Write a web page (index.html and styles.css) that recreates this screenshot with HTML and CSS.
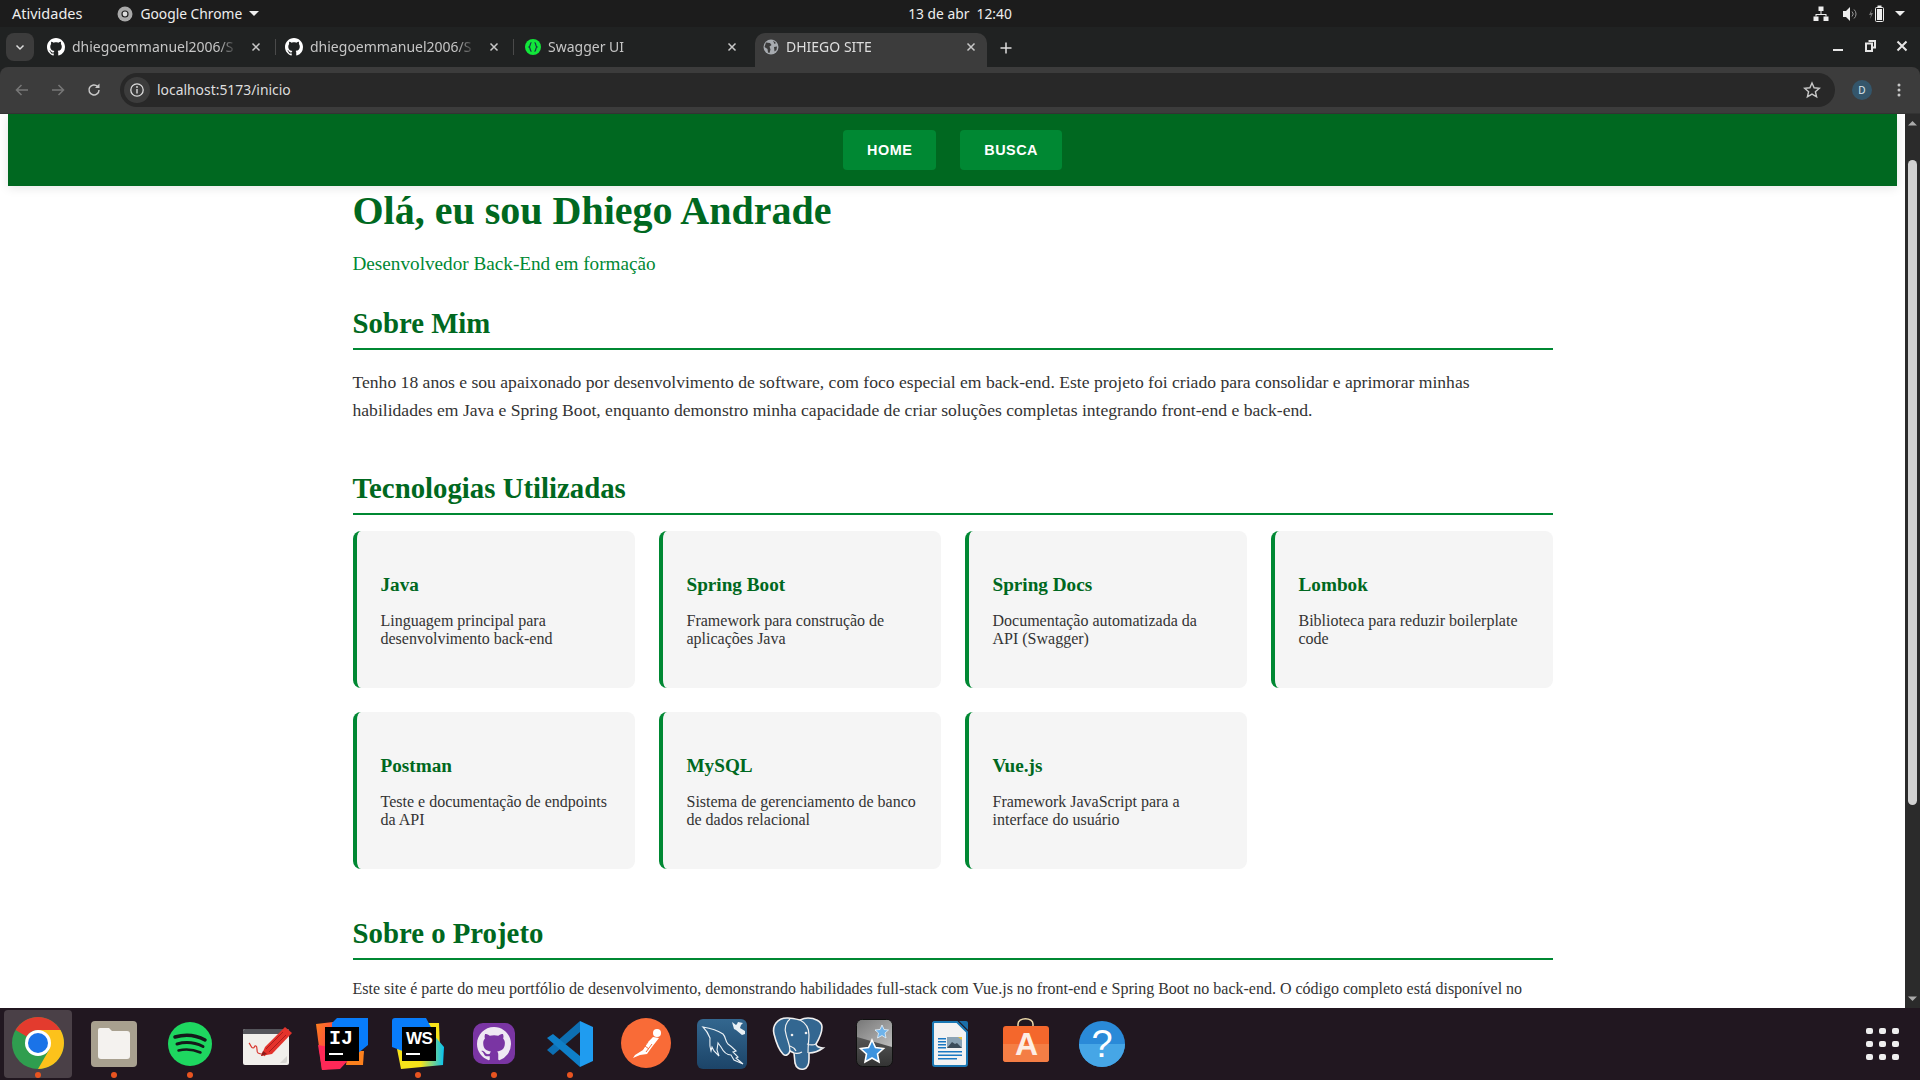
FILE: index.html
```html
<!DOCTYPE html>
<html lang="pt-BR">
<head>
<meta charset="UTF-8">
<title>DHIEGO SITE</title>
<link rel="stylesheet" href="styles.css">
</head>
<body>
<svg class="defs" width="0" height="0">
    <symbol id="gh" viewBox="0 0 16 16">
        <path d="M8 0C3.58 0 0 3.58 0 8c0 3.54 2.29 6.53 5.47 7.59.4.07.55-.17.55-.38 0-.19-.01-.82-.01-1.49-2.01.37-2.53-.49-2.69-.94-.09-.23-.48-.94-.82-1.13-.28-.15-.68-.52-.01-.53.63-.01 1.08.58 1.23.82.72 1.21 1.87.87 2.33.66.07-.52.28-.87.51-1.07-1.78-.2-3.64-.89-3.64-3.95 0-.87.31-1.59.82-2.15-.08-.2-.36-1.02.08-2.12 0 0 .67-.21 2.2.82.64-.18 1.32-.27 2-.27.68 0 1.36.09 2 .27 1.53-1.04 2.2-.82 2.2-.82.44 1.1.16 1.92.08 2.12.51.56.82 1.27.82 2.15 0 3.07-1.87 3.75-3.65 3.95.29.25.54.73.54 1.48 0 1.07-.01 1.93-.01 2.2 0 .21.15.46.55.38A8.013 8.013 0 0016 8c0-4.42-3.58-8-8-8z"/>
    </symbol>
    <symbol id="x" viewBox="0 0 16 16">
        <path d="M4.5 4.5l7 7M11.5 4.5l-7 7" stroke="#c8c8c8" stroke-width="1.5" fill="none"/>
    </symbol>
</svg>

<div class="topbar">
    <div class="topbar-left">
        <span class="activities">Atividades</span>
        <span class="app-menu">
            <svg width="16" height="16" viewBox="0 0 16 16"><circle cx="8" cy="8" r="7.5" fill="#a9a9a9"/><circle cx="8" cy="8" r="3.6" fill="#222"/><circle cx="8" cy="8" r="2.4" fill="#ddd"/></svg>
            Google Chrome
            <i class="caret"></i>
        </span>
    </div>
    <div class="clock">13 de abr&nbsp; 12:40</div>
    <div class="tray">
        <svg width="16" height="16" viewBox="0 0 16 16" fill="#eee"><rect x="5.5" y="0.5" width="5" height="4.500"/><rect x="0.500" y="10.500" width="5" height="4.500"/><rect x="10.500" y="10.500" width="5" height="4.500"/><path d="M7.500 5h1v3h5v2.500h-1V9H3.500v1.500h-1V8h5z"/></svg>
        <svg width="16" height="16" viewBox="0 0 16 16"><path fill="#eee" d="M1 5h3l4-4v14l-4-4H1z"/><path d="M10 5.500a3.500 3.500 0 010 5M12 3.500a6 6 0 010 9" stroke="#999" fill="none" stroke-width="1"/></svg>
        <svg width="20" height="18" viewBox="0 0 20 18"><path fill="#777" d="M4 4L1 10h2l-1 4 3-6H3z"/><rect x="7.500" y="2.500" width="8" height="14" rx="1" fill="none" stroke="#eee"/><rect x="9" y="4" width="5" height="11" fill="#eee"/><rect x="9.500" y="0.500" width="4" height="2" fill="#eee"/></svg>
        <i class="caret"></i>
    </div>
</div>

<div class="tabstrip">
    <div class="tab-search"><svg width="12" height="12" viewBox="0 0 12 12"><path d="M2.500 4.500L6 8l3.500-3.500" stroke="#ddd" stroke-width="1.500" fill="none"/></svg></div>
    <div class="tab">
        <svg class="favicon favicon-gh" width="18" height="18"><use href="#gh"/></svg>
        <span class="tab-title">dhiegoemmanuel2006/S</span>
        <svg class="tab-close" width="16" height="16"><use href="#x"/></svg>
    </div>
    <div class="tab">
        <svg class="favicon favicon-gh" width="18" height="18"><use href="#gh"/></svg>
        <span class="tab-title">dhiegoemmanuel2006/S</span>
        <svg class="tab-close" width="16" height="16"><use href="#x"/></svg>
    </div>
    <div class="tab tab-last">
        <svg class="favicon" width="16" height="16" viewBox="0 0 16 16"><circle cx="8" cy="8" r="8" fill="#12e63a"/><path d="M6.500 3.500C4.500 4 6 7 4 8c2 1 .5 4 2.500 4.500M9.500 3.500C11.500 4 10 7 12 8c-2 1-.5 4-2.500 4.500" stroke="#173646" stroke-width="1.200" fill="none"/></svg>
        <span class="tab-title">Swagger UI</span>
        <svg class="tab-close" width="16" height="16"><use href="#x"/></svg>
    </div>
    <div class="tab tab-active">
        <svg class="favicon" width="16" height="16" viewBox="0 0 16 16"><circle cx="8" cy="8" r="7.500" fill="#a7abb0"/><path d="M3 3.500l4 .5 1.500 2-2 1.500 1 3-1 3.500-1.500-.5-.5-3.500-3-2zM10 1.500l3 2.500-1.500 1zM11 8l3-.5-.5 3.500-2 1.500z" fill="#3c3c3c"/></svg>
        <span class="tab-title">DHIEGO SITE</span>
        <svg class="tab-close" width="16" height="16"><use href="#x"/></svg>
    </div>
    <svg class="new-tab" width="16" height="16" viewBox="0 0 16 16"><path d="M8 2.500v11M2.500 8h11" stroke="#ddd" stroke-width="1.500"/></svg>
    <div class="window-controls">
        <svg width="16" height="16" viewBox="0 0 16 16"><rect x="3" y="11" width="10" height="2" fill="#e6e6e6"/></svg>
        <svg width="16" height="16" viewBox="0 0 16 16"><path d="M6.500 3h6.500v6.500h-2" fill="none" stroke="#e6e6e6" stroke-width="2"/><rect x="4" y="5.500" width="6" height="7.500" fill="none" stroke="#e6e6e6" stroke-width="2"/></svg>
        <svg width="16" height="16" viewBox="0 0 16 16"><path d="M3.500 3.500l9 9M12.500 3.500l-9 9" stroke="#e6e6e6" stroke-width="2"/></svg>
    </div>
</div>

<div class="toolbar">
    <div class="nav-buttons">
        <svg width="16" height="16" viewBox="0 0 16 16"><path d="M14 8H3M7.500 3L2.500 8l5 5" stroke="#777" stroke-width="1.500" fill="none"/></svg>
        <svg width="16" height="16" viewBox="0 0 16 16"><path d="M2 8h11M8.500 3l5 5-5 5" stroke="#777" stroke-width="1.500" fill="none"/></svg>
        <svg width="16" height="16" viewBox="0 0 16 16"><path d="M13 8a5 5 0 11-1.500-3.600" stroke="#c8c8c8" stroke-width="1.500" fill="none"/><path d="M13.500 1.500v4.500H9z" fill="#c8c8c8"/></svg>
    </div>
    <div class="omnibox">
        <span class="site-info"><svg width="16" height="16" viewBox="0 0 16 16"><circle cx="8" cy="8" r="6.200" fill="none" stroke="#ddd" stroke-width="1.300"/><path d="M8 7v4.500" stroke="#ddd" stroke-width="1.400"/><circle cx="8" cy="5" r=".9" fill="#ddd"/></svg></span>
        <span class="url">localhost:5173/inicio</span>
        <svg class="star" width="18" height="18" viewBox="0 0 18 18"><path d="M9 2l2.100 4.800 5.200.5-3.900 3.400 1.200 5.100L9 13.100l-4.600 2.700 1.200-5.100-3.900-3.400 5.200-.5z" fill="none" stroke="#c8c8c8" stroke-width="1.400"/></svg>
    </div>
    <span class="avatar">D</span>
    <svg class="kebab" width="16" height="16" viewBox="0 0 16 16" fill="#c8c8c8"><circle cx="8" cy="3" r="1.500"/><circle cx="8" cy="8" r="1.500"/><circle cx="8" cy="13" r="1.500"/></svg>
</div>

<div class="viewport">
    <div class="site">
        <nav class="site-nav">
            <a class="nav-btn">HOME</a>
            <a class="nav-btn">BUSCA</a>
        </nav>
        <main class="content">
            <h1>Olá, eu sou Dhiego Andrade</h1>
            <p class="subtitle">Desenvolvedor Back-End em formação</p>

            <section class="about">
                <h2>Sobre Mim</h2>
                <p class="lead">Tenho 18 anos e sou apaixonado por desenvolvimento de software, com foco especial em back-end. Este projeto foi criado para consolidar e aprimorar minhas habilidades em Java e Spring Boot, enquanto demonstro minha capacidade de criar soluções completas integrando front-end e back-end.</p>
            </section>

            <section class="tech">
                <h2>Tecnologias Utilizadas</h2>
                <div class="tech-grid">
                    <div class="tech-card"><h3>Java</h3><p>Linguagem principal para desenvolvimento back-end</p></div>
                    <div class="tech-card"><h3>Spring Boot</h3><p>Framework para construção de aplicações Java</p></div>
                    <div class="tech-card"><h3>Spring Docs</h3><p>Documentação automatizada da API (Swagger)</p></div>
                    <div class="tech-card"><h3>Lombok</h3><p>Biblioteca para reduzir boilerplate code</p></div>
                    <div class="tech-card"><h3>Postman</h3><p>Teste e documentação de endpoints da API</p></div>
                    <div class="tech-card"><h3>MySQL</h3><p>Sistema de gerenciamento de banco de dados relacional</p></div>
                    <div class="tech-card"><h3>Vue.js</h3><p>Framework JavaScript para a interface do usuário</p></div>
                </div>
            </section>

            <section class="project">
                <h2>Sobre o Projeto</h2>
                <p>Este site é parte do meu portfólio de desenvolvimento, demonstrando habilidades full-stack com Vue.js no front-end e Spring Boot no back-end. O código completo está disponível no GitHub.</p>
            </section>
        </main>
    </div>
    <div class="scrollbar">
        <svg width="15" height="12" viewBox="0 0 15 12"><path d="M3 8.500L7.500 4l4.500 4.500z" fill="#aaa"/></svg>
        <div class="scroll-track"><div class="scroll-thumb"></div></div>
        <svg width="15" height="12" viewBox="0 0 15 12"><path d="M3 3.500L7.500 8 12 3.500z" fill="#aaa"/></svg>
    </div>
</div>

<div class="dock">
    <div class="dock-item dock-active">
        <svg width="60" height="60" viewBox="0 0 60 60">
            <circle cx="30" cy="30" r="26" fill="#2f9e4f"/>
            <path d="M30 17h22.500A26 26 0 0130 56l11.300-19.500z" fill="#fcc21b"/>
            <path d="M7.500 17a26 26 0 0145 0H30a13 13 0 00-11.300 6.500z" fill="#e33b2e"/>
            <circle cx="30" cy="30" r="13" fill="#fff"/>
            <circle cx="30" cy="30" r="10" fill="#1a73e8"/>
        </svg>
        <i class="running"></i>
    </div>
    <div class="dock-item">
        <svg width="60" height="60" viewBox="0 0 60 60">
            <rect x="7" y="8" width="46" height="46" rx="4" fill="#a8a08f"/>
            <path d="M14 17a2 2 0 012-2h9l3 3h15a3 3 0 013 3v22a3 3 0 01-3 3H17a3 3 0 01-3-3z" fill="#f4f2ef"/>
        </svg>
        <i class="running"></i>
    </div>
    <div class="dock-item">
        <svg width="60" height="60" viewBox="0 0 60 60">
            <circle cx="30" cy="31" r="22" fill="#1ed760"/>
            <path d="M15 24c10-3 21-2 30 3" stroke="#15191a" stroke-width="3.500" fill="none" stroke-linecap="round"/>
            <path d="M17 31c9-2.500 18-1.500 26 2.500" stroke="#15191a" stroke-width="3" fill="none" stroke-linecap="round"/>
            <path d="M18.500 37.500c8-2 15-1 22 2" stroke="#15191a" stroke-width="2.500" fill="none" stroke-linecap="round"/>
        </svg>
        <i class="running"></i>
    </div>
    <div class="dock-item">
        <svg width="60" height="60" viewBox="0 0 60 60">
            <rect x="7" y="16" width="46" height="36" rx="2" fill="#f1efeb"/>
            <path d="M7 18a2 2 0 012-2h42a2 2 0 012 2v3H7z" fill="#55555b"/>
            <path d="M13 30c2 2 2 5 4 5s1-3 3-2 0 6 2 7 2 1 4 1 3 2 3 2" stroke="#d8332b" stroke-width="1.200" fill="none"/>
            <path d="M25 43l4-9 20-20 7 6-20 21z" fill="#e4322b"/>
            <path d="M30 36l17-17M33 39l17-17" stroke="#a91e1c" stroke-width="1"/>
            <path d="M25 43l2-5 4 3z" fill="#8f1a18"/>
            <path d="M44 50l7-7v5a2 2 0 01-2 2z" fill="#d8d6d2"/>
        </svg>
    </div>
    <div class="dock-item">
        <svg width="60" height="60" viewBox="0 0 60 60">
            <defs><linearGradient id="ij" x1="0" y1="0" x2="1" y2="1"><stop offset="0" stop-color="#fc801d"/><stop offset="1" stop-color="#fe2857"/></linearGradient></defs>
            <path d="M4 11l17-2 1 46-12 2z" fill="url(#ij)"/>
            <path d="M36 38h16l-1 14H34z" fill="#fc801d"/>
            <path d="M6 32l22 4 15 4-15 16-18 1z" fill="#fe2857"/>
            <path d="M20 10l5-5h31v27l-11 9-25-8z" fill="#087cfa"/>
        </svg>
        <div class="jb-mark">IJ<i></i></div>
    </div>
    <div class="dock-item">
        <svg width="60" height="60" viewBox="0 0 60 60">
            <defs><linearGradient id="ws" x1="0" y1="0" x2="1" y2="0"><stop offset="0" stop-color="#f7e31a"/><stop offset="0.500" stop-color="#f7e31a"/><stop offset="1" stop-color="#07c3f2"/></linearGradient></defs>
            <path d="M37 10h14l1 26H37z" fill="#f7e31a"/>
            <path d="M9 36l4 20 42-4 1-18-12-14-14 10z" fill="url(#ws)"/>
            <path d="M4 8a3 3 0 013-3h31l8 15-2 20-14 4L4 34z" fill="#087cfa"/>
        </svg>
        <div class="jb-mark jb-ws">WS<i></i></div>
        <i class="running"></i>
    </div>
    <div class="dock-item">
        <svg width="60" height="60" viewBox="0 0 60 60">
            <rect x="9" y="10" width="42" height="41" rx="10" fill="#7a35a3"/>
            <use href="#gh" x="13" y="14" width="34" height="34" fill="#efe9f3"/>
        </svg>
        <i class="running"></i>
    </div>
    <div class="dock-item">
        <svg width="60" height="60" viewBox="0 0 60 60">
            <path d="M40 8v11L13 42l-6-5z" fill="#0d6fb3"/>
            <path d="M7 25l6-4 27 22v11z" fill="#0f7fc8"/>
            <path d="M40 8l13 6v34l-13 6z" fill="#1f9cf0"/>
        </svg>
        <i class="running"></i>
    </div>
    <div class="dock-item">
        <svg width="60" height="60" viewBox="0 0 60 60">
            <circle cx="30" cy="30" r="25" fill="#f96b37"/>
            <path d="M17 45l7-3 7-1 5-7 7-9-6-1-6 6-4 7-8 5z" fill="#fff"/>
            <path d="M26 37l6-8M30 39l6-8M33 36l-4-3" stroke="#f96b37" stroke-width="1"/>
            <circle cx="41" cy="20" r="4" fill="#fff"/>
        </svg>
    </div>
    <div class="dock-item">
        <svg width="60" height="60" viewBox="0 0 60 60">
            <defs><linearGradient id="my" x1="0" y1="0" x2="0" y2="1"><stop offset="0" stop-color="#33678f"/><stop offset="1" stop-color="#1c4468"/></linearGradient></defs>
            <rect x="5" y="6" width="50" height="50" rx="6" fill="url(#my)"/>
            <path d="M11 14c6 1 14 3 20 7 3 3 2 7 5 10 3 2 5 4 8 7l-3 1 5 5-2 1 7 6-9-4-3-5c-4 0-8-4-10-8l-3-4-1 7 2 6-5-5-2-4-1 4c-2-6-1-10-1-13-2-5-5-9-7-11z" fill="none" stroke="#e9f0f5" stroke-width="1.100"/>
            <path d="M40 9l4 3 1-1 1-2 5 1-2 2-1 3 5 3v3l-3 1-6-5-2-1z" fill="#e9f0f5"/>
        </svg>
    </div>
    <div class="dock-item">
        <svg width="60" height="60" viewBox="0 0 60 60">
            <path d="M19 5C9 5 4 13 6 21c2 8 5 16 9 20 3 3 6 0 7-3l4 2 1 10c1 5 5 7 9 6s5-6 5-10v-6c5 0 10-2 14-5-4 0-7-2-7-4 3-5 6-11 6-17 0-6-8-9-14-9-3 0-6 1-8 2-4-1-8-2-12-2z" fill="#336791" stroke="#f0f0f0" stroke-width="1.600"/>
            <path d="M22 6c-4 3-6 9-4 15 1 6 4 10 4 17M32 7c6 3 9 9 9 15 0 5-1 9-1 18M22 33c3 1 5 3 6 5M27 40c2 1 5 0 7-1M48 31c-2 1-6 1-9 0" fill="none" stroke="#f0f0f0" stroke-width="1.200"/>
            <circle cx="24" cy="22" r="1.300" fill="#f0f0f0"/><circle cx="38" cy="20" r="1.300" fill="#f0f0f0"/>
        </svg>
    </div>
    <div class="dock-item">
        <svg width="60" height="60" viewBox="0 0 60 60">
            <defs>
                <linearGradient id="an" x1="0" y1="0" x2="0" y2="1"><stop offset="0" stop-color="#6a6a6a"/><stop offset="1" stop-color="#333"/></linearGradient>
                <linearGradient id="an2" x1="0" y1="0" x2="1" y2="1"><stop offset="0" stop-color="#777"/><stop offset="1" stop-color="#bdbdbd"/></linearGradient>
            </defs>
            <rect x="12.500" y="6.500" width="36" height="47" rx="6" fill="url(#an)" stroke="#111"/>
            <path d="M13 24V12a5 5 0 015-5h25a5 5 0 015 5v22z" fill="url(#an2)"/>
            <path d="M38 12l2 4.500 4.500.500-3.500 3 1 5-4-2.500-4.500 2.500 1-5-3.500-3 5-.500z" fill="#6fb3ea" stroke="#e8f2fa" stroke-width=".8"/>
            <path d="M28 27l3.500 7.500 8 1-6 5.500 1.500 8-7-4-7 4 1.500-8-6-5.500 8-1z" fill="#3d93de" stroke="#fff" stroke-width="1.600"/>
        </svg>
    </div>
    <div class="dock-item">
        <svg width="60" height="60" viewBox="0 0 60 60">
            <path d="M14 9h23l10 10v32a2 2 0 01-2 2H15a2 2 0 01-2-2V10z" fill="#f2f2f2" stroke="#1a78b4" stroke-width="2"/>
            <path d="M39 8h7a2 2 0 012 2v7z" fill="#1a6ea8"/>
            <rect x="27" y="24" width="15" height="11" fill="#8ba3b4"/>
            <path d="M27 35l5-6 3 2 2-1 5 5z" fill="#3b4c5a"/>
            <path d="M38 24h4v3z" fill="#e8c33c"/>
            <path d="M18 25h8v1.500h-8zM18 28h8v1.500h-8zM18 31h8v1.500h-8zM18 34h8v1.500h-8zM18 38h24v1.500H18zM18 41.500h24V43H18zM18 45h19v1.500H18z" fill="#1a78c2"/>
        </svg>
    </div>
    <div class="dock-item">
        <svg width="60" height="60" viewBox="0 0 60 60">
            <path d="M22 14V11a7 5 0 0115 0v3" fill="none" stroke="#ecd9a9" stroke-width="1.500"/>
            <rect x="7" y="13" width="46" height="36" rx="3" fill="#f4672c"/>
            <path d="M7 31h46v15a3 3 0 01-3 3H10a3 3 0 01-3-3z" fill="#f47e45"/>
            <text x="30.500" y="42" class="store-a">A</text>
        </svg>
    </div>
    <div class="dock-item">
        <svg width="60" height="60" viewBox="0 0 60 60">
            <circle cx="30" cy="31" r="23" fill="#2a8ad8"/>
            <path d="M7 31h46a23 23 0 01-46 0z" fill="#46a6e6"/>
            <text x="30" y="44" class="help-mark">?</text>
        </svg>
    </div>
    <div class="apps-grid">
        <i></i><i></i><i></i><i></i><i></i><i></i><i></i><i></i><i></i>
    </div>
</div>
</body>
</html>
```

FILE: styles.css
```css
* {
    box-sizing: border-box;
}

html,
body {
    margin: 0;
    padding: 0;
    width: 1920px;
    height: 1080px;
    overflow: hidden;
    background-color: #202222;
}

.defs {
    position: absolute;
}

/* desktop top bar */
.topbar {
    height: 27px;
    background-color: #1c1c1c;
    color: #eee;
    font-family: "Noto Sans", sans-serif;
    font-size: 14px;
    display: flex;
    align-items: center;
    justify-content: space-between;
    padding: 0 12px;
}

.topbar-left {
    width: 600px;
    display: flex;
    align-items: center;
    gap: 35px;
}

.activities {
    font-size: 14.500px;
    margin-top: -1px;
}

.app-menu {
    display: flex;
    align-items: center;
    gap: 7px;
    font-size: 13.800px;
}

.caret {
    width: 0;
    height: 0;
    border-left: 5px solid transparent;
    border-right: 5px solid transparent;
    border-top: 5px solid #eee;
}

.clock {
    font-size: 13.800px;
}

.tray {
    width: 600px;
    display: flex;
    justify-content: flex-end;
    align-items: center;
    gap: 10px;
    padding-right: 3px;
}

.tray svg:first-child {
    margin-right: 3px;
}

.tray .caret {
    margin-left: -3px;
}

/* chrome tabs */
.tabstrip {
    height: 40px;
    background-color: #202222;
    color: #c6c6c6;
    font-family: "Noto Sans", sans-serif;
    font-size: 14px;
    display: flex;
    align-items: flex-end;
    padding-left: 6px;
}

.tab-search {
    width: 28px;
    height: 28px;
    margin-bottom: 6px;
    margin-right: 4px;
    background-color: #3c3c3c;
    border-radius: 8px;
    display: flex;
    align-items: center;
    justify-content: center;
}

.tab {
    width: 238px;
    height: 34px;
    display: flex;
    align-items: center;
    padding: 0 12px 6px 9px;
    position: relative;
}

.tab::after {
    content: "";
    position: absolute;
    right: 0;
    top: 6px;
    height: 16px;
    width: 1px;
    background-color: #4a4a4a;
}

.tab-last::after,
.tab-active::after {
    display: none;
}

.tab-title {
    flex: 1;
    min-width: 0;
    margin-left: 7px;
    margin-bottom: 1px;
    white-space: nowrap;
    overflow: hidden;
    -webkit-mask-image: linear-gradient(to right, #000 88%, transparent 100%);
    mask-image: linear-gradient(to right, #000 88%, transparent 100%);
}

.tab-close {
    margin-left: 10px;
    flex: none;
}

.favicon {
    flex: none;
}

.favicon-gh {
    fill: #fff;
}

.tab-last .favicon {
    margin-left: 2px;
}

.tab-active {
    width: 232px;
    margin-left: 3px;
    padding: 0 8px 6px 8px;
    background-color: #3c3c3c;
    border-radius: 10px 10px 0 0;
    color: #dedede;
}

.new-tab {
    margin: 0 0 11px 11px;
}

.window-controls {
    margin-left: auto;
    display: flex;
    gap: 16px;
    padding-right: 10px;
    margin-bottom: 13px;
}

/* chrome toolbar */
.toolbar {
    height: 47px;
    background-color: #3c3c3c;
    border-radius: 8px 8px 0 0;
    display: flex;
    align-items: center;
    padding-left: 14px;
    border-bottom: 1px solid #333;
    font-family: "Noto Sans", sans-serif;
}

.nav-buttons {
    display: flex;
    gap: 20px;
    width: 106px;
}

.omnibox {
    width: 1715px;
    height: 34px;
    background-color: #282828;
    border-radius: 17px;
    display: flex;
    align-items: center;
    padding: 0 14px 0 4px;
}

.site-info {
    width: 26px;
    height: 26px;
    background-color: #3c3c3c;
    border-radius: 50%;
    display: flex;
    align-items: center;
    justify-content: center;
}

.url {
    margin-left: 7px;
    margin-bottom: 1px;
    color: #dedede;
    font-size: 13.900px;
}

.star {
    margin-left: auto;
}

.avatar {
    width: 20px;
    height: 20px;
    margin-left: 17px;
    border-radius: 50%;
    background-color: #34566b;
    color: #dce6ec;
    font-size: 10px;
    display: flex;
    align-items: center;
    justify-content: center;
}

.kebab {
    margin-left: 19px;
}

/* the page itself */
.viewport {
    height: 894px;
    display: flex;
    overflow: hidden;
}

.site {
    flex: 1;
    min-width: 0;
    padding: 0 8px;
    background-color: #fff;
    color: #333;
    font-family: "Liberation Serif", serif;
    overflow: hidden;
}

.site-nav {
    height: 72px;
    background-color: #006820;
    box-shadow: 0 2px 10px rgba(0, 0, 0, 0.1);
    display: flex;
    align-items: center;
    justify-content: center;
    gap: 24px;
}

.nav-btn {
    height: 40px;
    padding: 0 24px;
    background-color: #008833;
    color: #fff;
    border-radius: 4px;
    font-family: "Liberation Sans", sans-serif;
    font-size: 14.400px;
    font-weight: bold;
    letter-spacing: 0.500px;
    display: flex;
    align-items: center;
}

.content {
    max-width: 1200px;
    margin: 0 auto;
}

h1 {
    margin: 2px 0 0;
    font-size: 40px;
    line-height: 46px;
    color: #006820;
}

.subtitle {
    margin: 19px 0 0;
    font-size: 19.200px;
    line-height: 22px;
    color: #008833;
}

h2 {
    margin: 0;
    font-size: 28.800px;
    line-height: 33px;
    padding-bottom: 8px;
    color: #006820;
    border-bottom: 2px solid #008833;
}

.about {
    margin-top: 32px;
}

.lead {
    margin: 18px 0 0;
    font-size: 17.600px;
    line-height: 28.200px;
}

.tech {
    margin-top: 48px;
}

.tech-grid {
    margin-top: 16px;
    display: grid;
    grid-template-columns: repeat(4, 1fr);
    gap: 24px;
}

.tech-card {
    height: 157px;
    padding: 43px 24px 0 24px;
    background-color: #f5f5f5;
    border-left: 4px solid #008833;
    border-radius: 8px;
}

.tech-card h3 {
    margin: 0;
    font-size: 19.200px;
    line-height: 22px;
    color: #006820;
}

.tech-card p {
    margin: 16px 0 0;
    font-size: 16px;
    line-height: 18px;
}

.project {
    margin-top: 48px;
}

.project p {
    margin: 16px 0 0;
    font-size: 16px;
    line-height: 25.600px;
}

.scrollbar {
    width: 15px;
    flex: none;
    background-color: #2b2b2b;
    display: flex;
    flex-direction: column;
    padding: 3px 0;
}

.scroll-track {
    flex: 1;
    padding: 31px 3px 0;
}

.scroll-thumb {
    height: 645px;
    background-color: #d2d2d2;
    border-radius: 5px;
}

/* ubuntu dock */
.dock {
    height: 72px;
    background-color: #211720;
    display: flex;
    padding: 2px 0 0 0;
}

.dock-item {
    width: 76px;
    height: 68px;
    padding-top: 3px;
    display: flex;
    justify-content: center;
    position: relative;
}

.dock-active::before {
    content: "";
    position: absolute;
    left: 4px;
    right: 4px;
    top: 0;
    bottom: 0;
    background-color: #4a4047;
    border-radius: 4px;
}

.dock-item svg {
    position: relative;
}

.running {
    position: absolute;
    left: 35px;
    bottom: 0;
    width: 6px;
    height: 6px;
    border-radius: 50%;
    background-color: #e95420;
}

.jb-mark {
    position: absolute;
    left: 21px;
    top: 17px;
    width: 34px;
    height: 34px;
    padding: 2px 4px;
    background-color: #000;
    color: #fff;
    font-family: "Liberation Mono", monospace;
    font-size: 20px;
    font-weight: bold;
    line-height: 20px;
}

.jb-mark i {
    display: block;
    width: 14px;
    height: 2px;
    margin-top: 4px;
    background-color: #fff;
}

.jb-ws {
    left: 22px;
    font-family: "Liberation Sans", sans-serif;
    font-size: 17px;
    letter-spacing: -0.500px;
}

.store-a {
    font-family: "Liberation Sans", sans-serif;
    font-size: 32px;
    font-weight: bold;
    fill: #fdeee5;
    text-anchor: middle;
}

.help-mark {
    font-family: "Liberation Sans", sans-serif;
    font-size: 38px;
    fill: #fff;
    text-anchor: middle;
}

.apps-grid {
    margin-left: auto;
    margin-right: 21px;
    margin-top: 18px;
    width: 33px;
    height: 32px;
    display: grid;
    grid-template-columns: repeat(3, 7px);
    grid-template-rows: repeat(3, 6px);
    justify-content: space-between;
    align-content: space-between;
}

.apps-grid i {
    background-color: #eee;
    border-radius: 2px;
}
```
